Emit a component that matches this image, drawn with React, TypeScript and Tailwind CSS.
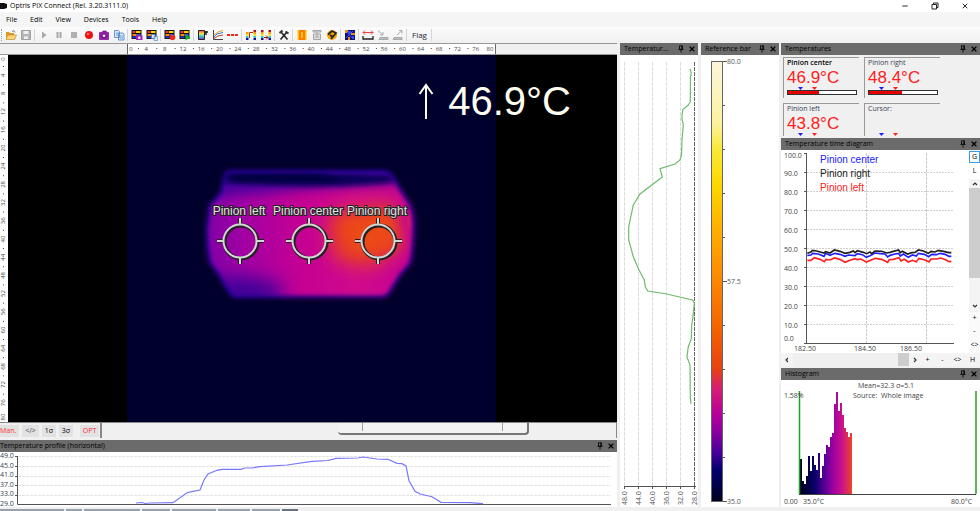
import { useState, type ReactNode } from 'react';
import { Minus, X } from 'lucide-react';

const MENU = ['File', 'Edit', 'View', 'Devices', 'Tools', 'Help'];

const RULER = Array.from({ length: 21 }, (_, i) => i * 4);

const PROFILE_LINE =
    '136,503 142,502.5 145,503.5 150,503 173,502.7 187,492.7 193,491.3 200,490 204,480 208,474 217,470.3 222,469.3 241,469.3 245,468 252,468 260,466.7 287,465 312,461.3 328,460.5 336,458.3 358,458 363,457 377,459 388,459.3 397,463.3 402,463.7 406,466 409,480.7 415,491.3 420,494 432,496.7 441,502.3 470,502.7 483,503.7';

const VERTICAL_LINE =
    '690,69 691.3,72.7 690.5,77 690.3,101.7 688.3,105 683,109.3 682,115 682,120 683.3,124 682,140 681.5,155 680,160 675,164 660,168.7 662.3,177 640,194 633.3,205 628.7,226.7 628.7,240 633.3,256.7 639,270 644.3,280 645.3,286.7 647.7,291 666.7,294 692.3,300 694.3,303 693,316.7 691.7,325 691.3,339 688.3,346.7 687,357 690,365 690.3,396.7 691,404';

// time diagram series, drawn on a 441 x 51 grid
const SERIES = [
    {
        name: 'Pinion center',
        color: '#2020ff',
        points: '97,196 108,195 113,190 130,192 147,199 152,190 165,196 180,190 195,193 210,199 220,195 240,197 247,191 262,194 274,202 285,197 300,189 315,191 330,192 338,201 345,196 360,192 371,190 376,198 385,192 400,202 412,195 424,198 430,190 448,193 461,200 470,193 485,194 495,190 510,193 522,199 529,199',
    },
    {
        name: 'Pinion right',
        color: '#202020',
        points: '97,190 108,186 112,181 125,183 147,189 152,185 165,189 178,180 195,184 210,190 225,187 235,183 240,188 247,182 265,187 275,191 285,186 290,191 300,183 320,184 335,189 345,187 355,184 371,180 376,188 382,184 398,192 410,188 420,187 430,180 445,183 460,190 468,184 480,186 490,181 505,184 522,188 529,188',
    },
    {
        name: 'Pinion left',
        color: '#ff2020',
        points: '97,211 108,211 118,203 135,208 148,215 153,208 165,210 178,204 195,208 210,217 225,211 240,206 247,209 258,207 274,216 290,209 302,205 320,208 338,217 343,209 355,208 372,203 378,213 388,208 400,216 412,211 424,215 432,205 448,209 462,216 468,207 485,207 497,204 512,209 522,215 529,214',
    },
];

const BINS = [35, 13, 10, 18, 38, 23, 38, 29, 24, 41, 16, 28, 40, 49, 47, 57, 61, 90, 102, 83, 91, 79, 66, 62, 57, 61];

const SPOTS = [
    { name: 'Pinion left', x: 240 },
    { name: 'Pinion center', x: 309 },
    { name: 'Pinion right', x: 378 },
];

const READINGS = [
    { name: 'Pinion center', value: '46.9°C', fill: 46, bold: true },
    { name: 'Pinion right', value: '48.4°C', fill: 48, bold: false },
    { name: 'Pinion left', value: '43.8°C', fill: 40, bold: false },
    { name: 'Cursor:', value: '', fill: 0, bold: false },
];

function Pin() {
    return (
        <svg viewBox="0 0 8 8" className="h-2 w-2">
            <path d="M2.5 .8h3v3.4h-3zM1.5 4.5h5M4 4.5v3" fill="none" stroke="#111" strokeWidth="1" />
            <path d="M4.3 .8h1.2v3.4H4.3z" fill="#111" />
        </svg>
    );
}

function PanelHeader({ title, flush = false }: { title: string; flush?: boolean }) {
    return (
        <div className="flex h-3 shrink-0 items-center gap-[3px] bg-[#6b6b6b] pr-0.5 text-black">
            <h2 className={flush ? 'min-w-0 flex-1 text-[7px] leading-3' : 'min-w-0 flex-1 pl-1 text-[7px] leading-3'}>{title}</h2>
            <button aria-label="Pin"><Pin /></button>
            <button aria-label="Close"><X className="h-2 w-2" strokeWidth={3.5} /></button>
        </div>
    );
}

function Heat({ children }: { children?: ReactNode }) {
    return (
        <svg viewBox="0 0 12 12" className="h-3 w-3">
            <rect x=".5" y="1" width="10" height="9" fill="#151515" />
            <path d="M1.5 2h3v2h-3z" fill="#f33" />
            <path d="M5 2h4.500v2H5z" fill="#ffd800" />
            <path d="M1.500 5h4v2h-4z" fill="#ff8a00" />
            <path d="M1.500 7.500h4V9h-4z" fill="#2038f0" />
            <path d="M6 5h3.500v2H6z" fill="#3050ff" />
            {children}
        </svg>
    );
}

function Glyph({ children }: { children: ReactNode }) {
    return <svg viewBox="0 0 12 12" className="h-3 w-3" fill="none">{children}</svg>;
}

function Rainbow({ x, top = 1 }: { x: number; top?: number }) {
    return (
        <>
            {top < 3 && <rect x={x} y="1" width="2.500" height="2" fill="#b01010" />}
            <rect x={x} y="3" width="2.500" height="2" fill="#ff9a00" />
            <rect x={x} y="5" width="2.500" height="2" fill="#f3e620" />
            <rect x={x} y="7" width="2.500" height="2" fill="#30c8d0" />
            <rect x={x} y="9" width="2.500" height="2" fill="#1010a0" />
        </>
    );
}

const TOOL_GROUPS: { label: string; icon: ReactNode }[][] = [
    [
        { label: 'Open', icon: <Glyph><path d="M1 3h3l1 1h4v2H3L1 10z" fill="#d99a2b" /><path d="M3 6h8.500L9.500 10.500H1z" fill="#ffd778" stroke="#b97f1c" strokeWidth=".6" /><path d="M7 2.500c1.500-1.500 3-.5 3 1" stroke="#777" /></Glyph> },
        { label: 'Save', icon: <Glyph><path d="M1.500 1.500h9v9h-9z" fill="#b5b5b5" stroke="#a0a0a0" /><path d="M3.500 2h5v3h-5zM4 7.500h4V10H4z" fill="#eee" /></Glyph> },
    ],
    [
        { label: 'Play', icon: <Glyph><path d="M4 2.500 8.500 6 4 9.500z" fill="#a8a8a8" /></Glyph> },
        { label: 'Pause', icon: <Glyph><path d="M3.500 3h2v6h-2zM6.500 3h2v6h-2z" fill="#a8a8a8" /></Glyph> },
        { label: 'Stop', icon: <Glyph><path d="M3 3h6v6H3z" fill="#b0b0b0" /></Glyph> },
        { label: 'Record', icon: <Glyph><circle cx="6" cy="6" r="4" fill="#ee1111" /><circle cx="5" cy="5" r="1.300" fill="#ff7070" /></Glyph> },
        { label: 'Snapshot', icon: <Glyph><path d="M1.500 3.500H4L5 2h3l1 1.500h1.500v7h-9z" fill="#9a1ab0" stroke="#7c0c90" strokeWidth=".7" /><circle cx="6" cy="6.800" r="2" fill="#f2d8f6" stroke="#4d0a5c" /></Glyph> },
        { label: 'Copy', icon: <Glyph><path d="M1.500 1.500h4l1 1v6h-5zM5.500 4h4.500l1 1v6H5.500z" fill="#d9e9fb" stroke="#4a7fc0" strokeWidth=".8" /><path d="M7 7h3M7 9h3M3 4h2M3 6h2" stroke="#6b9bd6" /></Glyph> },
    ],
    [
        { label: 'Image snapshot', icon: <Heat><path d="M5 6.500h6.500V11H5z" fill="#a020b8" /><circle cx="8.300" cy="8.700" r="1.300" fill="#fff" /></Heat> },
        { label: 'Copy image', icon: <Heat><path d="M5.500 5.500h3.500v4H5.500zM8 7.500h3.500v4H8z" fill="#dcebff" stroke="#4a7fc0" strokeWidth=".6" /></Heat> },
    ],
    [
        { label: 'Record layout', icon: <Heat><circle cx="8.500" cy="8.500" r="2.800" fill="#ee2a1a" /></Heat> },
        { label: 'Play layout', icon: <Heat><path d="M6.500 5.500 11.500 8.500 6.500 11.500z" fill="#14b81e" /></Heat> },
    ],
    [
        { label: 'Palette', icon: <Glyph><defs><linearGradient id="pal" x1="0" y1="0" x2="0" y2="1"><stop stopColor="#ff4040" /><stop offset=".35" stopColor="#f5e642" /><stop offset=".6" stopColor="#43d9c6" /><stop offset="1" stopColor="#7b2fd0" /></linearGradient></defs><path d="M1.500 1.500h6v9h-6z" fill="url(#pal)" stroke="#222" /><path d="M7 3h4M9 2v4" stroke="#222" strokeWidth="1.500" /></Glyph> },
        { label: 'Profile', icon: <Glyph><path d="M1.500 1v9.500H11" stroke="#444" /><path d="M2 8 5 5l6-1.500" stroke="#2d7fe0" /><path d="M2 6 6 3l5-1.500" stroke="#f0a020" /><path d="M2 9.500 6 7l5-1" stroke="#d04040" /></Glyph> },
        { label: 'Alarm line', icon: <Glyph><path d="M0 6h12" stroke="#ef2b1c" strokeWidth="2" strokeDasharray="3 1" /></Glyph> },
    ],
    [
        { label: 'Range up', icon: <Glyph><Rainbow x={1} top={3} /><Rainbow x={8.5} /><path d="M4.500 9V3.500H8" stroke="#b03010" /></Glyph> },
        { label: 'Range down', icon: <Glyph><Rainbow x={1} /><Rainbow x={8.5} /><path d="M4 8.500h4M6 6.500l2 2-2 2" stroke="#a01010" /></Glyph> },
    ],
    [
        { label: 'Configuration', icon: <Glyph><path d="m3 3 6.500 7.500M9 3 2.500 10.500" stroke="#222" strokeWidth="1.600" /><path d="M1.500 4 4.500 1.500M7.500 2.500 10.500 4.500" stroke="#333" strokeWidth="2" /></Glyph> },
    ],
    [
        { label: 'Hot spot', icon: <Glyph><path d="M1.500 1h9v10h-9z" fill="#ffc400" /><path d="M3 1h6v10H3z" fill="#ff7a00" /><path d="M5 3h2v6H5z" fill="#ffc030" /></Glyph> },
        { label: 'Sensor', icon: <Glyph><path d="M2 1.500h8v1.500H2zM2.500 5h7v5.500h-7zM6 3v5M4 8h4" stroke="#a5a5a5" fill="#ddd" /></Glyph> },
        { label: 'Shutter', icon: <Glyph><circle cx="6" cy="6" r="5" fill="#f7a500" /><path d="M2 5.500 6 2l4 2-5 6M4 6l3 2" stroke="#222" strokeWidth="1.800" /></Glyph> },
    ],
    [
        { label: 'Isotherm', icon: <Glyph><path d="M1 1h10v10H1z" fill="#101070" /><path d="M1 1h3v3H1zM7 4h4v2H7zM4 8h2v3H4z" fill="#f08a18" /><path d="M4 2h3v3H4zM8 7h2v3H8z" fill="#2848ff" /><path d="M2 9 9 2M3 3l6 7" stroke="#3050ff" /></Glyph> },
    ],
    [
        { label: 'Distance', icon: <Glyph><path d="M1 3.500h10M3 1.500 1 3.500l2 2M9 1.500l2 2-2 2" stroke="#ef4040" /><path d="M1 7v3h10V7" stroke="#222" strokeWidth="1.300" /></Glyph> },
        { label: 'Import', icon: <Glyph><path d="m1 1.500 5 4.500M6 3v3H3" stroke="#aaa" /><path d="M3 8.500h8v2H2z" fill="#bbb" stroke="#aaa" /></Glyph> },
        { label: 'Export', icon: <Glyph><path d="m5 6 5-4.500M7 1.500h3v3" stroke="#aaa" /><path d="M2 8.500h8v2H1z" fill="#bbb" stroke="#aaa" /></Glyph> },
    ],
];

function Toolbar() {
    return (
        <div className="flex h-4 shrink-0 items-center bg-gradient-to-b from-[#fcfcfc] to-[#f0f0f0]">
            <span className="mr-px h-3 w-0.5 border-r border-dotted border-gray-400" />
            {TOOL_GROUPS.map((group, i) => (
                <div key={i} className="flex items-center">
                    {group.map((tool) => (
                        <button key={tool.label} aria-label={tool.label} className="flex w-[15px] justify-center">
                            {tool.icon}
                        </button>
                    ))}
                    <span className="mx-px h-3 w-px bg-gray-300" />
                </div>
            ))}
            <button className="border-r border-gray-300 px-1 text-[8px] leading-3 text-gray-800">Flag</button>
        </div>
    );
}

function HorizontalRuler() {
    return (
        <div className="flex h-3 shrink-0 justify-center border-y border-[#999] bg-[#f0f0f0] pl-1.5">
            <svg viewBox="0 0 369 10" className="h-2.5 w-[369px] bg-white text-[6px]" fill="#444">
                <path d="M.5 0v10M368.500 0v10" stroke="#666" />
                {RULER.map((n, i) => (
                    <g key={n}>
                        <text x={n === 0 ? 4 : n === 80 ? 363 : 1 + i * 18.3} y="7" textAnchor="middle">{n}</text>
                        {n < 76 && <rect x={11 + i * 18.3} y="4" width="1" height="1" />}
                    </g>
                ))}
            </svg>
        </div>
    );
}

function VerticalRuler() {
    return (
        <svg viewBox="0 0 8 367" preserveAspectRatio="xMinYMin meet" className="h-full w-2 shrink-0 bg-white text-[6px]" fill="#444">
            {RULER.map((n, i) => {
                const y = n === 0 ? 4 : n === 80 ? 362 : 2 + i * 18.2;
                return (
                    <g key={n}>
                        <text x="5" y={y} textAnchor="middle" transform={`rotate(-90 5 ${y})`}>{n}</text>
                        {n < 76 && <rect x="3" y={11 + i * 18.2} width="1" height="1" />}
                    </g>
                );
            })}
        </svg>
    );
}

const BODY =
    'M229 170 H386 Q394 172 400 187 L411 204 Q416 214 415 230 Q414 255 411 264 L400 277 L391 292 Q388 298 380 298 H234 Q228 296 218 275 L209 263 Q205 245 206 227 L209 205 L220 192 L223 177 Q225 170 229 170Z';

function ThermalImage() {
    return (
        <svg viewBox="127 55 369 367" className="h-full w-full">
            <defs>
                <filter id="soft" x="-20%" y="-20%" width="140%" height="140%"><feGaussianBlur stdDeviation="2" /></filter>
                <filter id="band" x="-20%" y="-100%" width="140%" height="300%"><feGaussianBlur stdDeviation="6 2.500" /></filter>
                <filter id="softer" x="-50%" y="-50%" width="200%" height="200%"><feGaussianBlur stdDeviation="6" /></filter>
                <filter id="softest" x="-80%" y="-80%" width="260%" height="260%"><feGaussianBlur stdDeviation="9" /></filter>
                <mask id="body"><path d={BODY} fill="#fff" filter="url(#soft)" /></mask>
                <linearGradient id="heat">
                    <stop stopColor="#7400a6" />
                    <stop offset=".2" stopColor="#a000a4" />
                    <stop offset=".45" stopColor="#c40094" />
                    <stop offset=".7" stopColor="#d00a8c" />
                    <stop offset="1" stopColor="#c00098" />
                </linearGradient>
            </defs>
            <rect x="127" y="55" width="369" height="367" fill="#00002c" />
            <g mask="url(#body)">
                <rect x="195" y="160" width="230" height="145" fill="url(#heat)" />
                <path d="M190 198 V155 H415 V182 Q320 188 190 198Z" fill="#4a009c" filter="url(#softer)" />
                <path d="M222 173 Q310 170 396 175 L394 182 Q330 190 222 182Z" fill="#08005c" filter="url(#band)" />
                <path d="M230 174 H320 L345 182 H232Z" fill="#02003c" filter="url(#band)" />
                <path d="M330 170 H385 L392 174 Q360 174 330 172Z" fill="#3c009c" filter="url(#soft)" />
                <ellipse cx="240" cy="292" rx="44" ry="15" fill="#3c0098" filter="url(#softest)" />
                <path d="M332 212 L394 202 L404 246 L372 268 L338 262 Q322 236 332 212Z" fill="#e63c28" filter="url(#softest)" />
                <path d="M342 220 L390 214 L396 248 L352 252Z" fill="#ec4818" filter="url(#softer)" />
                <path d="M408 212 L410 228" stroke="#e83030" strokeWidth="2" filter="url(#soft)" />
                <path d={BODY} fill="none" stroke="#2400a0" strokeWidth="4" filter="url(#soft)" />
            </g>
            {SPOTS.map((s) => (
                <g key={s.name}>
                    <g stroke="#222" strokeWidth="4" fill="none">
                        <circle cx={s.x + 1} cy="242" r="16.500" />
                        <path d={`M${s.x} 218v7M${s.x} 258v6M${s.x - 23} 241h7M${s.x + 17} 241h7`} />
                    </g>
                    <g stroke="#d6d6d6" strokeWidth="2" fill="none">
                        <circle cx={s.x} cy="241" r="16.500" />
                        <path d={`M${s.x} 218v7M${s.x} 258v6M${s.x - 23} 241h7M${s.x + 17} 241h7`} />
                    </g>
                    <text x={s.x - 1} y="215" textAnchor="middle" fill="#e4e4e4" stroke="#222" strokeWidth="2" paintOrder="stroke" className="font-['Liberation_Sans',sans-serif] text-[12px]">
                        {s.name}
                    </text>
                </g>
            ))}
        </svg>
    );
}

function RangeStrip() {
    return (
        <div className="flex h-4 shrink-0 border-t border-[#888] bg-[#f0f0f0] text-[7px] leading-3">
            <div className="flex w-[100px] shrink-0 items-center gap-[3px]">
                <button className="h-3 w-[19px] bg-[#e2e2e2] text-left text-red-500">Man.</button>
                <button className="h-3 w-[17px] bg-[#e2e2e2] text-gray-700">&lt;/&gt;</button>
                <button className="h-3 w-[14px] bg-[#e2e2e2]">1σ</button>
                <button className="h-3 w-[14px] bg-[#e2e2e2]">3σ</button>
                <button className="ml-1 h-3 w-[19px] bg-[#e2e2e2] text-red-500">OPT</button>
            </div>
            <div className="flex min-w-0 flex-1 border-r border-l-2 border-[#888]">
                <div className="w-[46%]" />
                <div className="flex h-3 w-[37%] justify-between rounded-b-sm border-r-2 border-b-2 border-[#777] bg-[#f3f3f3] pr-6 pl-6">
                    <span className="h-2 w-px bg-gray-400" />
                    <span className="h-2 w-px bg-gray-400" />
                </div>
            </div>
        </div>
    );
}

function HorizontalProfile() {
    return (
        <section className="mt-0.5 flex shrink-0 flex-col bg-white">
            <PanelHeader title="Temperature profile (horizontal)" flush />
            <div className="flex h-[55px]">
                <div className="flex w-[14px] shrink-0 flex-col justify-between text-[7px] leading-[7px] text-gray-700">
                    {['49.0', '45.0', '41.0', '37.0', '33.0', '29.0'].map((t) => <span key={t}>{t}</span>)}
                </div>
                <svg viewBox="14 452 603 55" preserveAspectRatio="none" className="h-full min-w-0 flex-1">
                    {[456, 466, 476, 485, 495].map((y) => (
                        <path key={y} d={`M18 ${y}.5H611`} stroke="#e2e2e2" strokeDasharray="3 1" />
                    ))}
                    <path d="M17.500 456V504.500H611M15 456.500h3M15 466.500h3M15 476.500h3M15 485.500h3M15 495.500h3" fill="none" stroke="#555" />
                    <polyline points={PROFILE_LINE} fill="none" stroke="#7878ff" strokeWidth="1.200" />
                </svg>
            </div>
        </section>
    );
}

function VerticalProfile() {
    return (
        <section className="flex w-[78px] shrink-0 flex-col bg-white">
            <PanelHeader title="Temperatur..." />
            <svg viewBox="620 55 78 452" className="min-h-0 w-full flex-1 text-[7px]" fill="#555">
                {['48.0', '44.0', '40.0', '36.0', '32.0', '28.0'].map((t, i) => {
                    const x = 624.5 + i * 14;
                    return (
                        <g key={t}>
                            <path d={`M${x} 62V487`} stroke={i === 5 ? '#666' : '#ddd'} strokeDasharray="4 1" />
                            <path d={`M${x} 486v3`} stroke="#555" />
                            <text x={x + 2} y="505" transform={`rotate(-90 ${x + 2} 505)`}>{t}</text>
                        </g>
                    );
                })}
                <path d="M624 486.500H696" stroke="#555" />
                <polyline points={VERTICAL_LINE} fill="none" stroke="#6dbb6d" strokeWidth="1.200" />
            </svg>
        </section>
    );
}

function ReferenceBar() {
    return (
        <section className="flex w-[78px] shrink-0 flex-col bg-white">
            <PanelHeader title="Reference bar" />
            <svg viewBox="701 55 78 452" className="min-h-0 w-full flex-1 text-[7px]" fill="#555">
                <defs>
                    <linearGradient id="iron" x1="0" y1="0" x2="0" y2="1">
                        <stop stopColor="#fdf5dc" />
                        <stop offset=".14" stopColor="#fbf2a0" />
                        <stop offset=".2" stopColor="#fae838" />
                        <stop offset=".28" stopColor="#fcd800" />
                        <stop offset=".38" stopColor="#ffb000" />
                        <stop offset=".5" stopColor="#fc8600" />
                        <stop offset=".6" stopColor="#f46600" />
                        <stop offset=".7" stopColor="#e84014" />
                        <stop offset=".74" stopColor="#d82070" />
                        <stop offset=".8" stopColor="#b8009a" />
                        <stop offset=".84" stopColor="#8c00a0" />
                        <stop offset=".89" stopColor="#46009a" />
                        <stop offset=".93" stopColor="#00006c" />
                        <stop offset="1" stopColor="#000020" />
                    </linearGradient>
                </defs>
                <rect x="711.500" y="61.500" width="11" height="440" fill="url(#iron)" stroke="#666" />
                {Array.from({ length: 11 }, (_, i) => (
                    <path key={i} d={`M723 ${61.5 + i * 44}h${i % 5 === 0 ? 4 : 2}`} stroke="#555" />
                ))}
                <text x="727" y="64">80.0</text>
                <text x="727" y="284">57.5</text>
                <text x="727" y="504">35.0</text>
            </svg>
        </section>
    );
}

function Temperatures() {
    return (
        <section className="flex shrink-0 flex-col">
            <PanelHeader title="Temperatures" />
            <div className="grid h-[81px] grid-cols-[76px_76px] content-start gap-[5px] overflow-hidden px-0.5 pt-0.5">
                {READINGS.map((r) => (
                    <div key={r.name} className="h-[41px] border-t border-l border-[#999] pl-[3px]">
                        <div className={r.bold ? 'text-[7px] leading-[10px] font-semibold' : 'text-[7px] leading-[10px] text-gray-700'}>{r.name}</div>
                        <div className="h-[19px] font-['Liberation_Sans',sans-serif] text-[17px] leading-[19px] text-[#ff2020]">{r.value}</div>
                        <svg viewBox="0 0 70 3" className="h-[3px] w-[70px]">
                            <path d="M11 0h5l-2.500 3z" fill="#1a1aff" />
                            <path d="M25 0h5l-2.500 3z" fill="#ff2020" />
                        </svg>
                        <div className="h-[5px] w-[70px] border border-[#333] bg-white">
                            <div className="h-full bg-[#e60000]" style={{ width: `${r.fill}%` }} />
                        </div>
                    </div>
                ))}
            </div>
        </section>
    );
}

function TimeDiagram() {
    return (
        <section className="mt-0.5 flex min-h-0 flex-1 flex-col bg-white">
            <PanelHeader title="Temperature time diagram" />
            <div className="flex min-h-0 flex-1">
                <svg viewBox="781 150 188 203" className="min-h-0 min-w-0 flex-1 text-[7px]" fill="#444">
                    {Array.from({ length: 11 }, (_, i) => {
                        const y = 153.5 + i * 19;
                        return (
                            <g key={i}>
                                {i > 0 && i < 10 && <path d={`M807 ${y}H954`} stroke="#d0d0d0" strokeDasharray="2 1" />}
                                <path d={`M804 ${y}h3`} stroke="#555" />
                                <text x="784" y={i === 0 ? 158 : i === 10 ? 341 : y + 3}>{(100 - i * 10).toFixed(1)}</text>
                            </g>
                        );
                    })}
                    <path d="M866.500 153V343M926.500 153V343" stroke="#ccc" strokeDasharray="3 1" />
                    <path d="M806.500 153V343.500H954" fill="none" stroke="#555" />
                    <text x="805" y="351" textAnchor="middle">182.50</text>
                    <text x="865" y="351" textAnchor="middle">184.50</text>
                    <text x="911" y="351" textAnchor="middle">186.50</text>
                    {SERIES.map((s, i) => (
                        <text key={s.name} x="820" y={163 + i * 14} fill={s.color} className="font-['Liberation_Sans',sans-serif] text-[10px]">
                            {s.name}
                        </text>
                    ))}
                    <svg x="807" y="248" width="147" height="17" viewBox="96 174 441 51">
                        {SERIES.map((s) => (
                            <polyline key={s.name} points={s.points} fill="none" stroke={s.color} strokeWidth="5" />
                        ))}
                    </svg>
                </svg>
                <div className="flex w-[11px] shrink-0 flex-col items-stretch bg-[#f4f4f4] text-[7px] leading-3">
                    <button className="mt-px h-3 border border-[#3b9be8] bg-white leading-[10px]">G</button>
                    <button className="h-4 bg-white">L</button>
                    <button aria-label="Scroll up" className="flex h-[9px] items-center justify-center"><Chevron d="m1 4 2-2 2 2" /></button>
                    <div className="min-h-0 flex-1">
                        <div className="h-[80%] bg-[#cdcdcd]" />
                    </div>
                    <button aria-label="Scroll down" className="flex h-3 items-center justify-center"><Chevron d="m1 2 2 2 2-2" /></button>
                    <button className="h-3 bg-[#fafafa]">+</button>
                    <button className="h-[13px] bg-[#fafafa]">-</button>
                    <button className="h-4 bg-[#fafafa]">&lt;&gt;</button>
                </div>
            </div>
            <div className="flex h-[13px] shrink-0 items-center bg-[#f4f4f4] text-[7px] leading-3">
                <button aria-label="Scroll left" className="flex w-3 justify-center"><Chevron d="M4 1 2 3l2 2" /></button>
                <div className="flex h-full min-w-0 flex-1 justify-end bg-[#f0f0f0]">
                    <div className="h-full w-[11px] bg-[#cdcdcd]" />
                </div>
                <button aria-label="Scroll right" className="flex w-[11px] justify-center"><Chevron d="m2 1 2 2-2 2" /></button>
                <button className="w-[15px]">+</button>
                <button className="w-[15px]">-</button>
                <button className="w-[15px]">&lt;&gt;</button>
                <button className="w-[15px]">H</button>
            </div>
        </section>
    );
}

function Chevron({ d }: { d: string }) {
    return (
        <svg viewBox="0 0 6 6" className="h-1.5 w-1.5">
            <path d={d} fill="none" stroke="#333" strokeWidth="1.200" />
        </svg>
    );
}

function Histogram() {
    return (
        <section className="mt-0.5 flex shrink-0 flex-col bg-white">
            <PanelHeader title="Histogram" />
            <svg viewBox="781 380 199 127" className="h-[127px] w-full text-[7px]" fill="#444">
                <defs>
                    <linearGradient id="bins" gradientUnits="userSpaceOnUse" x1="800" y1="0" x2="852" y2="0">
                        <stop stopColor="#00001c" />
                        <stop offset=".28" stopColor="#080068" />
                        <stop offset=".48" stopColor="#5a0098" />
                        <stop offset=".64" stopColor="#a000a0" />
                        <stop offset=".8" stopColor="#c81090" />
                        <stop offset="1" stopColor="#ee4428" />
                    </linearGradient>
                </defs>
                <g fill="url(#bins)">
                    {BINS.map((h, i) => <rect key={i} x={800 + i * 2} y={494 - h} width="2" height={h} />)}
                </g>
                <path d="M799 494.500H976" stroke="#444" />
                <path d="M799.500 391V494M976 391V494" stroke="#22a022" strokeWidth="1.500" />
                <text x="886" y="388" textAnchor="middle">Mean=32.3 σ=5.1</text>
                <text x="853" y="398" xmlSpace="preserve">Source:  Whole image</text>
                <text x="784" y="398">1.58%</text>
                <text x="784" y="504">0.00</text>
                <text x="803" y="504">35.0°C</text>
                <text x="951" y="504">80.0°C</text>
            </svg>
        </section>
    );
}

export default function App() {
    const [menu, setMenu] = useState<string | null>(null);

    return (
        <div className="flex h-screen min-h-[480px] flex-col overflow-hidden bg-[#f0f0f0] font-['Open_Sans','Noto_Sans',sans-serif] text-black">
            {/* Title bar */}
            <header className="flex h-3 shrink-0 items-center bg-white pr-[11px]">
                <svg viewBox="0 0 10 8" className="h-2 w-2.5">
                    <path d="M0 1h4l3 1v4L4 7H0z" fill="#111" />
                </svg>
                <h1 className="flex-1 text-[7px] leading-3">Optris PIX Connect (Rel. 3.20.3111.0)</h1>
                <div className="flex items-center gap-[22px]">
                    <button aria-label="Minimize"><Minus className="h-2 w-2" strokeWidth={2.5} /></button>
                    <button aria-label="Restore">
                        <svg viewBox="0 0 8 8" className="h-2 w-2">
                            <path d="M1 2.500h4.500V7H1zM2.500 2.500V1H7v4.500H5.500" fill="none" stroke="#222" />
                        </svg>
                    </button>
                    <button aria-label="Close"><X className="h-2 w-2" strokeWidth={2.5} /></button>
                </div>
            </header>

            <nav className="flex h-[15px] shrink-0 items-center gap-[13px] bg-[#f5f5f5] pl-1.5 text-[7px] leading-3">
                {MENU.map((m) => (
                    <button key={m} aria-pressed={menu === m} onClick={() => setMenu(m)}>{m}</button>
                ))}
            </nav>

            <Toolbar />

            <main className="flex min-h-0 flex-1">
                {/* Camera view and horizontal profile */}
                <div className="mr-[3px] flex min-w-0 flex-1 flex-col overflow-hidden">
                    <HorizontalRuler />
                    <div className="relative flex min-h-0 flex-1 bg-black pr-0.5">
                        <VerticalRuler />
                        <ThermalImage />
                        <div className="absolute top-[23px] right-[46px] flex items-center gap-3.5 font-['Liberation_Sans',sans-serif] text-[40px] leading-[46px] text-[#fffff0]">
                            <svg viewBox="0 0 16 36" className="h-9 w-4" fill="none" stroke="currentColor" strokeWidth="2">
                                <path d="M8 36V2M1.500 11 8 2l6.500 9" />
                            </svg>
                            46.9°C
                        </div>
                    </div>
                    <RangeStrip />
                    <HorizontalProfile />
                </div>

                <div className="mr-0.5 flex shrink-0 gap-[3px]">
                    <VerticalProfile />
                    <ReferenceBar />
                </div>

                <aside className="flex w-[199px] shrink-0 flex-col">
                    <Temperatures />
                    <TimeDiagram />
                    <Histogram />
                </aside>
            </main>

            {/* Status bar */}
            <footer className="flex h-1 shrink-0 items-end gap-0.5">
                <span className="h-0.5 w-16 bg-gray-400" />
                <span className="h-0.5 w-4 bg-gray-400" />
                <span className="h-0.5 w-14 bg-gray-400" />
                <span className="h-0.5 w-7 bg-gray-400" />
                <span className="h-0.5 w-11 bg-gray-400" />
                <span className="h-0.5 w-8 bg-gray-400" />
                <span className="h-0.5 w-7 bg-gray-400" />
                <span className="h-0.5 w-4 bg-gray-500" />
            </footer>
        </div>
    );
}
